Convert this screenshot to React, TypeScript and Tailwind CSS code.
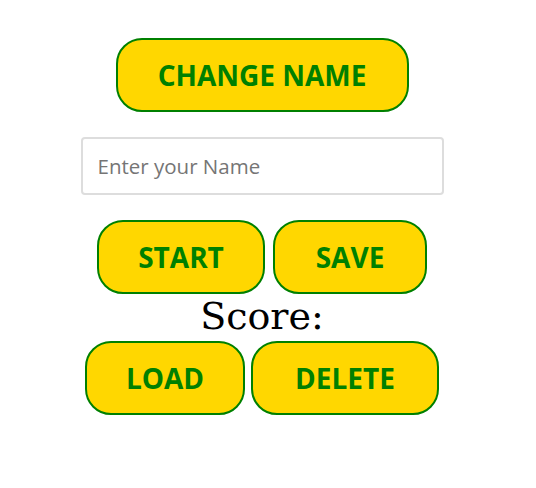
const btn =
  "flex h-[74px] items-center justify-center rounded-[26px] border-2 border-[#008000] bg-[#ffd700] text-[28px] font-bold text-[#008000] [font-family:'Open_Sans',sans-serif]";

export default function App() {
  return (
    <div className="flex w-[524px] flex-col items-center bg-white pt-[38px]">
      <button className={`${btn} w-[293px]`}>CHANGE NAME</button>

      <input
        type="text"
        placeholder="Enter your Name"
        className="mt-[25px] h-[58px] w-[363px] rounded border-2 border-[#dddddd] px-[15px] text-[20.5px] text-[#333] placeholder:text-[#757575] [font-family:'Open_Sans',sans-serif] outline-none"
      />

      <div className="mt-[25px] flex gap-[8px]">
        <button className={`${btn} w-[168px]`}>START</button>
        <button className={`${btn} w-[154px]`}>SAVE</button>
      </div>

      <p className="h-[47px] text-[38px] leading-[44px] text-black [font-family:'DejaVu_Serif',serif]">
        Score:
      </p>

      <div className="flex gap-[6px]">
        <button className={`${btn} w-[160px]`}>LOAD</button>
        <button className={`${btn} w-[188px]`}>DELETE</button>
      </div>
    </div>
  );
}
